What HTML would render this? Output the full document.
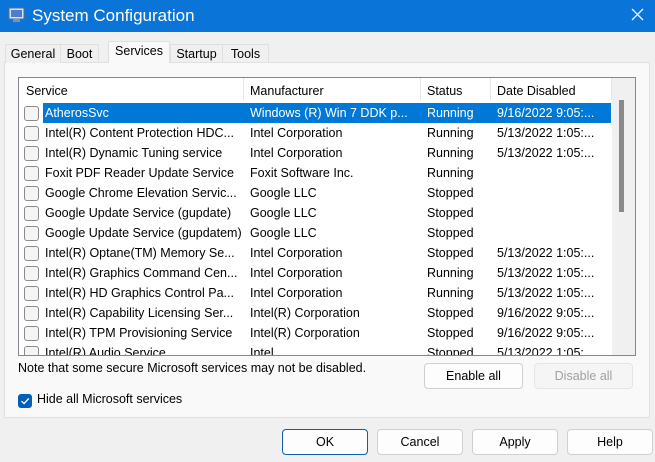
<!DOCTYPE html>
<html><head><style>
*{margin:0;padding:0;box-sizing:border-box}
body{width:655px;height:462px;background:#f0f0f0;font-family:"Liberation Sans",sans-serif;font-size:12.5px;color:#000;position:relative;overflow:hidden}
.a{position:absolute}
.title{left:0;top:0;width:655px;height:32px;background:#0a74d8;color:#fff;font-size:17px}
.tab{top:44px;height:19px;padding-top:2px;font-size:12.5px;text-align:center}
.panel{left:4px;top:62px;width:646px;height:356px;background:#f9f9f9;border:1px solid #e0e0e0}
.list{left:18px;top:77px;width:618px;height:279px;background:#fff;border:1px solid #828790;overflow:hidden}
.hdr{top:3px;height:22px;line-height:20px}
.sep{top:0;width:1px;height:22px;background:#e5e5e5}
.row{left:0;width:592px;height:20px;line-height:20px}
.cb{position:absolute;left:5px;top:3px;width:15px;height:15px;border:1px solid #8a8a8a;border-radius:3px;background:#f5f5f5}
.c{position:absolute;white-space:nowrap;overflow:hidden}
.btn{height:26px;border:1px solid #d0d0d0;border-radius:4px;background:#fdfdfd;text-align:center;line-height:24px;font-size:12.5px}
</style></head><body>
<div class="a title">
 <svg class="a" style="left:8px;top:7px" width="18" height="17" viewBox="0 0 18 17"><rect x="1" y="1" width="15" height="11" fill="#cfe0f5" stroke="#5a6b86"/><rect x="3" y="3" width="11" height="7" fill="#4a7fcf"/><rect x="5" y="12" width="7" height="3" fill="#8090a8"/></svg>
 <span class="a" style="left:32px;top:6px">System Configuration</span>
 <svg class="a" style="left:631px;top:8px" width="13" height="13"><path d="M1 1L12 12M12 1L1 12" stroke="#fff" stroke-width="1.3"/></svg>
</div>
<div class="a panel"></div>
<div class="a tab" style="left:5px;width:56px;border:1px solid #e0e0e0;border-bottom:none;background:#f0f0f0">General</div>
<div class="a tab" style="left:61px;width:38px;border:1px solid #e0e0e0;border-bottom:none;border-left:none">Boot</div>
<div class="a tab" style="left:108px;top:41px;height:22px;width:62px;border:1px solid #e0e0e0;border-bottom:none;background:#f9f9f9">Services</div>
<div class="a tab" style="left:170px;width:53px;border:1px solid #e0e0e0;border-bottom:none">Startup</div>
<div class="a tab" style="left:223px;width:46px;border:1px solid #e0e0e0;border-bottom:none;border-left:none">Tools</div>
<div class="a list">
 <div class="a hdr" style="left:7px">Service</div>
 <div class="a sep" style="left:224px;top:0"></div>
 <div class="a hdr" style="left:231px">Manufacturer</div>
 <div class="a sep" style="left:401px"></div>
 <div class="a hdr" style="left:408px">Status</div>
 <div class="a sep" style="left:471px"></div>
 <div class="a hdr" style="left:478px">Date Disabled</div>
 <div class="a sep" style="left:592px"></div>
 <div class="a" style="left:593px;top:0;width:24px;height:279px;background:#f0f0f0"></div>
 <div class="a" style="left:600px;top:22px;width:5px;height:112px;background:#8a8a8a"></div>
 <div id="rows"></div>
</div>
<div class="a" style="left:18px;top:361px">Note that some secure Microsoft services may not be disabled.</div>
<div class="a" style="left:18px;top:394px;width:14px;height:14px;background:#005fb8;border-radius:3px"><svg width="14" height="14"><path d="M3.5 7.2L6 9.6L10.8 4.5" stroke="#fff" stroke-width="1.3" fill="none"/></svg></div>
<div class="a" style="left:37px;top:392px">Hide all Microsoft services</div>
<div class="a btn" style="left:424px;top:363px;width:99px">Enable all</div>
<div class="a btn" style="left:534px;top:363px;width:99px;color:#a0a0a0;background:#f5f5f5;border-color:#e5e5e5">Disable all</div>
<div class="a btn" style="left:282px;top:429px;width:86px;border-color:#0a5fb0">OK</div>
<div class="a btn" style="left:377px;top:429px;width:86px">Cancel</div>
<div class="a btn" style="left:472px;top:429px;width:86px">Apply</div>
<div class="a btn" style="left:567px;top:429px;width:86px">Help</div>
<script>
var d=[["AtherosSvc","Windows (R) Win 7 DDK p...","Running","9/16/2022 9:05:..."],
["Intel(R) Content Protection HDC...","Intel Corporation","Running","5/13/2022 1:05:..."],
["Intel(R) Dynamic Tuning service","Intel Corporation","Running","5/13/2022 1:05:..."],
["Foxit PDF Reader Update Service","Foxit Software Inc.","Running",""],
["Google Chrome Elevation Servic...","Google LLC","Stopped",""],
["Google Update Service (gupdate)","Google LLC","Stopped",""],
["Google Update Service (gupdatem)","Google LLC","Stopped",""],
["Intel(R) Optane(TM) Memory Se...","Intel Corporation","Stopped","5/13/2022 1:05:..."],
["Intel(R) Graphics Command Cen...","Intel Corporation","Running","5/13/2022 1:05:..."],
["Intel(R) HD Graphics Control Pa...","Intel Corporation","Running","5/13/2022 1:05:..."],
["Intel(R) Capability Licensing Ser...","Intel(R) Corporation","Stopped","9/16/2022 9:05:..."],
["Intel(R) TPM Provisioning Service","Intel(R) Corporation","Stopped","9/16/2022 9:05:..."],
["Intel(R) Audio Service","Intel","Stopped","5/13/2022 1:05:..."]];
var h="";d.forEach(function(r,i){var s=i==0;
h+='<div class="a row" style="top:'+(25+i*20)+'px">'+(s?'<div class="a" style="left:24px;top:0;width:568px;height:20px;background:#0078d7"></div>':'')+
'<div class="cb"></div><div class="c" style="left:26px;width:196px;'+(s?'color:#fff':'')+'">'+r[0]+'</div><div class="c" style="left:231px;width:168px;'+(s?'color:#fff':'')+'">'+r[1]+'</div><div class="c" style="left:408px;'+(s?'color:#fff':'')+'">'+r[2]+'</div><div class="c" style="left:478px;'+(s?'color:#fff':'')+'">'+r[3]+'</div></div>';});
document.getElementById("rows").innerHTML=h;
</script>
</body></html>
